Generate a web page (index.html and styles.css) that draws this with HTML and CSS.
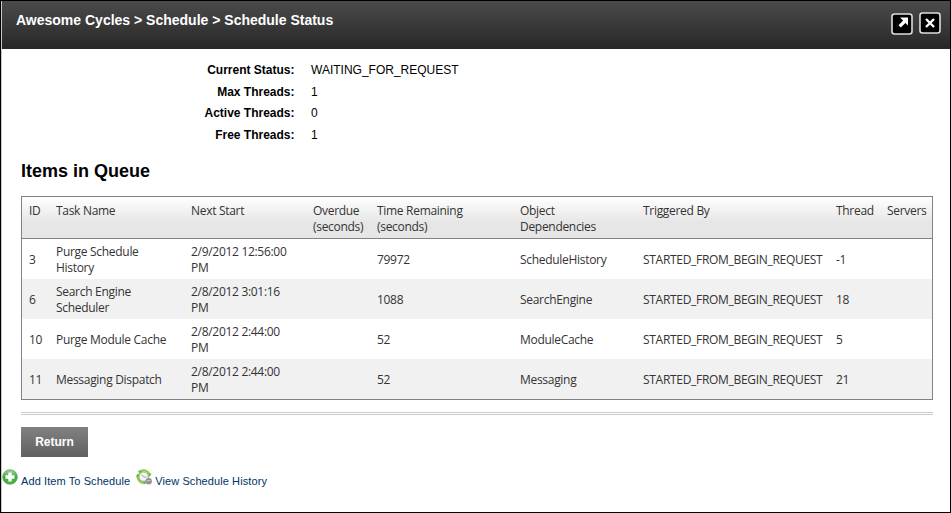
FILE: index.html
```html
<!DOCTYPE html>
<html lang="en">
<head>
<meta charset="utf-8">
<title>Schedule Status</title>
<link rel="stylesheet" href="styles.css">
</head>
<body>
<div class="dialog">
  <header class="titlebar">
    <h1 class="title">Awesome Cycles &gt; Schedule &gt; Schedule Status</h1>
    <div class="controls">
      <svg class="control control-expand" viewBox="0 0 22 22"><rect x="1" y="1" width="20" height="20" rx="2.5" fill="#000" stroke="#dedede" stroke-width="1.6"/><path d="M9 4.5h8v8l-2.6-2.6-4.6 4.6-2.3-2.3 4.6-4.6z" fill="#fff"/></svg>
      <svg class="control" viewBox="0 0 22 22"><rect x="1" y="1" width="20" height="20" rx="2.5" fill="#000" stroke="#dedede" stroke-width="1.6"/><path d="M7 7l8 8M15 7l-8 8" stroke="#fff" stroke-width="2.4"/></svg>
    </div>
  </header>
  <main class="content">
    <dl class="status">
      <dt>Current Status:</dt><dd>WAITING_FOR_REQUEST</dd>
      <dt>Max Threads:</dt><dd>1</dd>
      <dt>Active Threads:</dt><dd>0</dd>
      <dt>Free Threads:</dt><dd>1</dd>
    </dl>
    <h2 class="heading">Items in Queue</h2>
    <table class="queue">
      <colgroup><col class="c-id"><col class="c-task"><col class="c-next"><col class="c-overdue"><col class="c-time"><col class="c-object"><col class="c-trigger"><col class="c-thread"><col class="c-servers"></colgroup>
      <thead>
        <tr><th>ID</th><th>Task Name</th><th>Next Start</th><th>Overdue<br>(seconds)</th><th>Time Remaining<br>(seconds)</th><th>Object<br>Dependencies</th><th>Triggered By</th><th>Thread</th><th>Servers</th></tr>
      </thead>
      <tbody>
        <tr><td>3</td><td>Purge Schedule<br>History</td><td>2/9/2012 12:56:00<br>PM</td><td></td><td>79972</td><td>ScheduleHistory</td><td>STARTED_FROM_BEGIN_REQUEST</td><td>-1</td><td></td></tr>
        <tr><td>6</td><td>Search Engine<br>Scheduler</td><td>2/8/2012 3:01:16<br>PM</td><td></td><td>1088</td><td>SearchEngine</td><td>STARTED_FROM_BEGIN_REQUEST</td><td>18</td><td></td></tr>
        <tr><td>10</td><td>Purge Module Cache</td><td>2/8/2012 2:44:00<br>PM</td><td></td><td>52</td><td>ModuleCache</td><td>STARTED_FROM_BEGIN_REQUEST</td><td>5</td><td></td></tr>
        <tr><td>11</td><td>Messaging Dispatch</td><td>2/8/2012 2:44:00<br>PM</td><td></td><td>52</td><td>Messaging</td><td>STARTED_FROM_BEGIN_REQUEST</td><td>21</td><td></td></tr>
      </tbody>
    </table>
    <div class="divider"></div>
    <button class="return">Return</button>
  </main>
  <footer class="actions">
    <a class="action">
      <svg class="icon" viewBox="0 0 16 16"><defs><linearGradient id="green" x1="0" y1="0" x2="0" y2="1"><stop offset="0" stop-color="#a5d8a0"/><stop offset=".5" stop-color="#45a83e"/><stop offset="1" stop-color="#4bb53c"/></linearGradient></defs><circle cx="8" cy="8" r="7.3" fill="url(#green)" stroke="#4c984b" stroke-width=".7"/><path d="M6.3 3.5h3.4v2.8h2.8v3.4H9.7v2.8H6.3V9.7H3.5V6.3h2.8z" fill="#fff"/></svg>
      <span>Add Item To Schedule</span>
    </a>
    <a class="action">
      <svg class="icon" viewBox="0 0 16 16"><path d="M3.6 2.8A6.3 6.3 0 0 1 13.4 5" fill="none" stroke="#83d336" stroke-width="2.2"/><path d="M2 1.8h4.3L4 5.5zM11.5 4.5h4L13.8 8z" fill="#67bd20"/><path d="M1.7 6.5a6.3 6.3 0 0 0 7 7.3" fill="none" stroke="#83d336" stroke-width="2.2"/><path d="M0 7.5L2 4l2 4zM7.8 11.5v4l3.5-2z" fill="#67bd20"/><circle cx="7.7" cy="7.7" r="4.7" fill="#f5f5f5" stroke="#a5aaa7" stroke-width="1.2"/><path d="M5.5 5.5l2.2 2.5h2.8" fill="none" stroke="#888" stroke-width=".8"/><circle cx="12.7" cy="12.2" r="3.2" fill="#949494"/><path d="M10.8 11.6h3.8" stroke="#c8c8c8" stroke-width="1"/></svg>
      <span>View Schedule History</span>
    </a>
  </footer>
</div>
</body>
</html>
```
FILE: styles.css
```css
* { box-sizing: border-box; }
body { margin: 0; background: #fff; font-family: "Liberation Sans", Arial, sans-serif; font-size: 12px; color: #000; }
.dialog { width: 951px; height: 513px; border: 1px solid #000; box-shadow: inset 1px 0 #c9c9c9; overflow: hidden; }
.titlebar { display: flex; justify-content: space-between; height: 48px; margin-left: 1px; padding: 10px 9px 0 14px; background: linear-gradient(#4b4b4b, #272727); }
.title { margin: 0; color: #fff; font-size: 14px; line-height: 18px; font-weight: bold; white-space: nowrap; }
.controls { display: flex; gap: 6px; }
.control { width: 22px; height: 22px; margin-top: 1px; }
.control-expand { margin-top: 2px; }
.content { padding: 10px 17px 0 20px; }
.status { display: grid; grid-template-columns: 273.5px 1fr; column-gap: 16.5px; grid-auto-rows: 21.6px; margin: 0; line-height: 22px; }
.status dt { text-align: right; font-weight: bold; }
.status dd { margin: 0; }
.heading { margin: 15px 0 14px; font-size: 18px; line-height: 22px; height: 22px; }
.queue { width: 912px; height: 204px; table-layout: fixed; border-collapse: separate; border-spacing: 0; border: 1px solid #828282; color: #333; font-family: "Open Sans", "Noto Sans", sans-serif; font-size: 12px; line-height: 16px; letter-spacing: -.3px; }
.queue th, .queue td { text-align: left; font-weight: normal; white-space: nowrap; }
.queue thead { background: linear-gradient(#fff, #e6e6e6 60%, #e6e6e6); }
.queue th { height: 42px; padding: 6px 0 3px 7px; border-bottom: 1px solid #828282; vertical-align: top; }
.queue td { height: 40px; padding: 5px 0 3px 7px; vertical-align: middle; }
.queue tbody tr:nth-child(even) { background: #f1f1f1; }
.c-id { width: 27px; } .c-task { width: 135px; } .c-next { width: 122px; }
.c-overdue { width: 64px; } .c-time { width: 143px; } .c-object { width: 123px; }
.c-trigger { width: 193px; } .c-thread { width: 51px; } .c-servers { width: 52px; }
.divider { width: 912px; height: 3px; margin: 12px 0; border: solid #ccc; border-width: 1px 0; }
.return { display: block; width: 67px; height: 30px; padding: 0; border: 0; background: linear-gradient(#818181, #616161); color: #fff; font: bold 12px "Liberation Sans", Arial, sans-serif; }
.actions { display: flex; gap: 6px; margin: 12px 0 0 1px; font-size: 11px; line-height: 16px; letter-spacing: .09px; color: #003366; }
.action { display: flex; gap: 3px; white-space: nowrap; }
.action span { padding-top: 4px; }
.icon { width: 16px; height: 16px; }
```
